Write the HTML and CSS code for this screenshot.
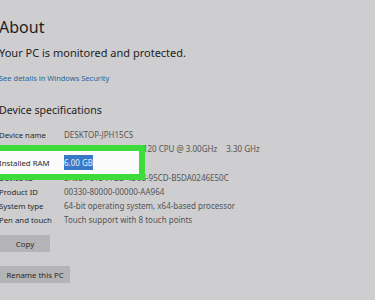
FILE: index.html
```html
<!DOCTYPE html>
<html lang="en">
<head>
    <meta charset="UTF-8">
    <meta name="viewport" content="width=device-width, initial-scale=1.0">
    <title>About</title>
    <link rel="stylesheet" href="styles.css">
</head>
<body>
    <div class="page">
        <h1 class="title">About</h1>
        <p class="status">Your PC is monitored and protected.</p>
        <a class="link" href="#">See details in Windows Security</a>

        <h2 class="heading">Device specifications</h2>
        <div class="specs">
            <div class="row"><span class="label">Device name</span><span class="value">DESKTOP-JPH15CS</span></div>
            <div class="row"><span class="label">Processor</span><span class="value">Intel(R) Core(TM) i3-2120 CPU @ 3.00GHz<span class="gap"></span>3.30 GHz</span></div>
            <!-- highlighted row -->
            <div class="row ram"><span class="label">Installed RAM</span><span class="value"><span class="sel">6.00 GB</span></span></div>
            <div class="row"><span class="label">Device ID</span><span class="value">5A0D7C1E-7F2B-4D68-95CD-B5DA0246E50C</span></div>
            <div class="row"><span class="label">Product ID</span><span class="value">00330-80000-00000-AA964</span></div>
            <div class="row"><span class="label">System type</span><span class="value">64-bit operating system, x64-based processor</span></div>
            <div class="row"><span class="label">Pen and touch</span><span class="value">Touch support with 8 touch points</span></div>
        </div>

        <button class="btn copy">Copy</button>
        <button class="btn rename">Rename this PC</button>
    </div>
</body>
</html>
```

FILE: styles.css
```css
*{
    margin: 0;
    padding: 0;
    box-sizing: border-box;
}
body{
    background-color: #cecdcf;
    font-family: "Noto Sans", "Open Sans", sans-serif;
    color: #1e1e1e;
    overflow: hidden;
}
.page{
    margin-left: -1px;
    padding-top: 17px;
    display: flex;
    flex-direction: column;
    align-items: flex-start;
}
.title{
    font-size: 16px;
    font-weight: 400;
    line-height: 20px;
}
.status{
    margin-top: 9px;
    font-size: 11px;
    line-height: 14px;
}
.link{
    margin-top: 12px;
    font-size: 7.5px;
    line-height: 12px;
    color: #2a6496;
    text-decoration: none;
}
.heading{
    margin-top: 19px;
    font-size: 10.6px;
    font-weight: 400;
    line-height: 14px;
}
.specs{
    margin-top: 11px;
    width: 100%;
}
.row{
    display: grid;
    grid-template-columns: 65px 1fr;
    font-size: 7.8px;
    line-height: 14.17px;
    white-space: nowrap;
}
.label{
    color: #2a2a2a;
}
.value{
    color: #555;
    font-size: 8px;
}
.gap{
    display: inline-block;
    width: 9px;
}
.ram{
    position: relative;
    z-index: 1;
    width: 156px;
    margin: -11px 0 -9px -10px;
    padding: 5px 0 3px 4px;
    border: 6px solid #3ddc3a;
    background-color: #fbfbfb;
}
.sel{
    background-color: #3a78c8;
    color: #e8f0ff;
    padding: 2px 0;
}
.btn{
    display: block;
    margin-left: 1px;
    border: none;
    background-color: #b4b3b5;
    font-family: "Noto Sans", "Open Sans", sans-serif;
    font-size: 7.8px;
    color: #2a2a2a;
}
.copy{
    margin-top: 8px;
    width: 50px;
    height: 17px;
}
.rename{
    margin-top: 14px;
    width: 70px;
    height: 17px;
}
```
